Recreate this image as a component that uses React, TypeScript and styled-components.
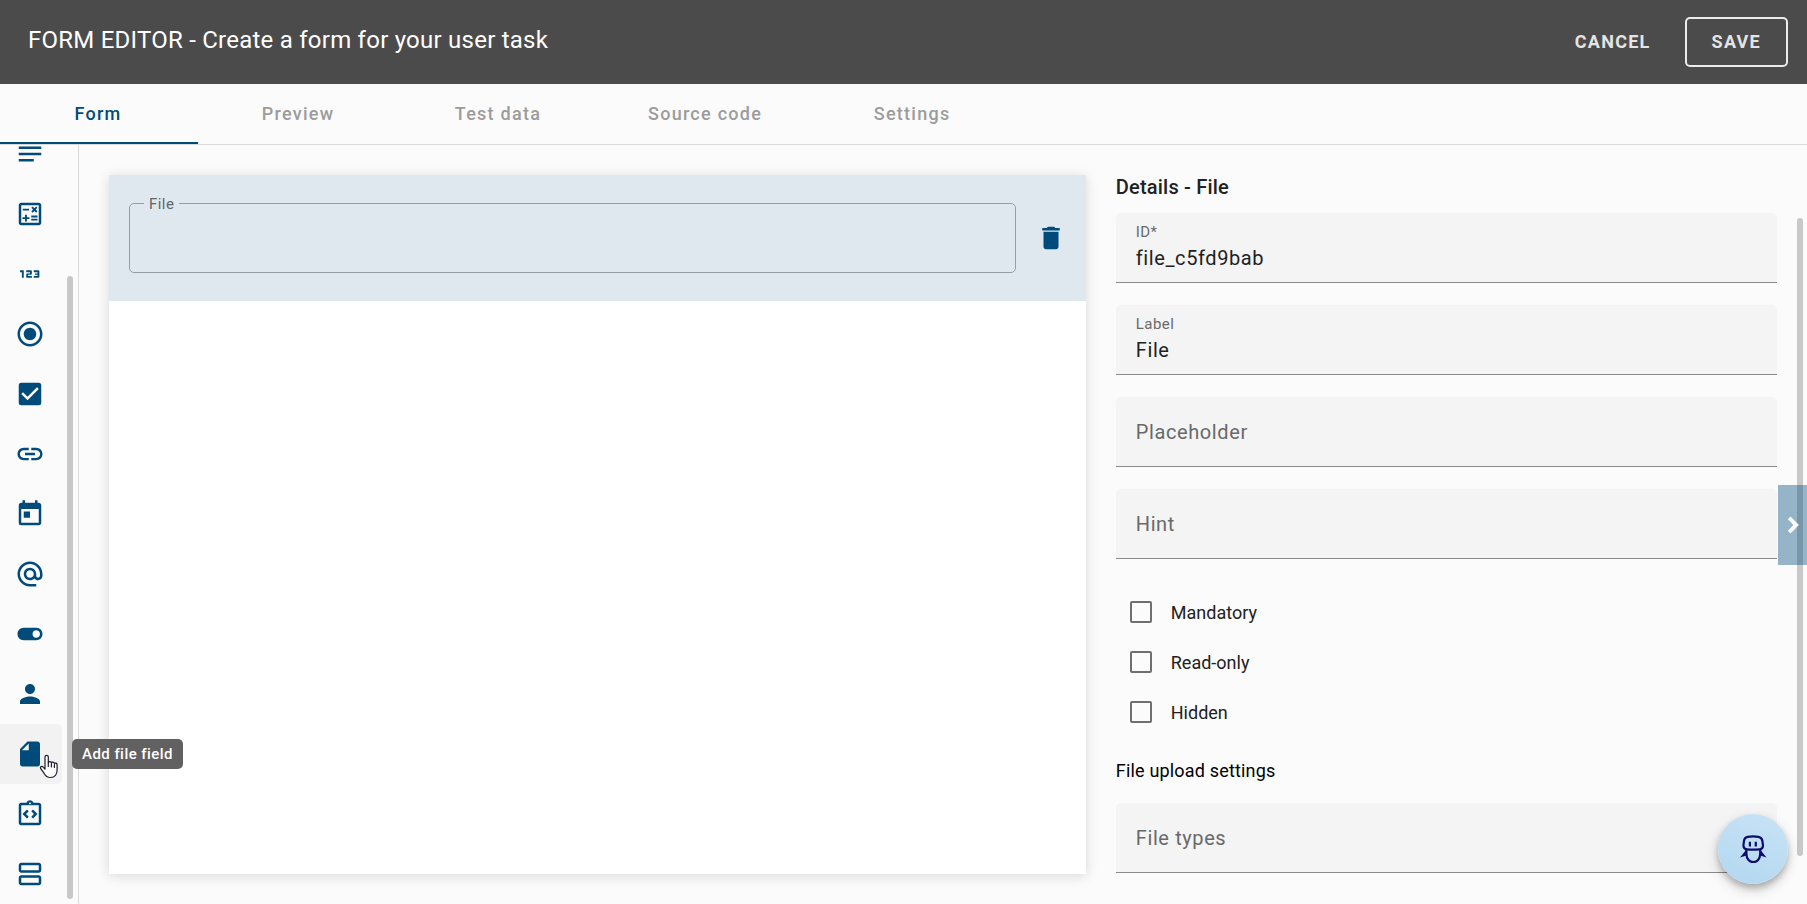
import React, { useState } from "react";
import styled, { createGlobalStyle, css } from "styled-components";
import type { IconType } from "react-icons";
import {
  Md123,
  MdAlternateEmail,
  MdCheckBox,
  MdChevronRight,
  MdDelete,
  MdInsertDriveFile,
  MdLink,
  MdNotes,
  MdOutlineCalculate,
  MdOutlineIntegrationInstructions,
  MdOutlineViewAgenda,
  MdPerson,
  MdRadioButtonChecked,
  MdToday,
  MdToggleOn,
} from "react-icons/md";

const color = {
  primary: "#004b7a",
  surface: "#fbfbfb",
  header: "#4b4b4b",
  line: "#dadada",
  field: "#f4f4f4",
  text: "#212121",
  muted: "#696969",
  scrollbar: "#c8c8c8",
};

const GlobalStyle = createGlobalStyle`
  *, *::before, *::after { box-sizing: border-box; }
  body {
    margin: 0;
    background: ${color.surface};
    color: ${color.text};
    font-family: Roboto, "Liberation Sans", sans-serif;
    font-size: 18px;
  }
  button, input { font: inherit; color: inherit; }
`;

const Page = styled.div`
  display: flex;
  flex-direction: column;
  height: 100vh;
  overflow: hidden;
`;

const Header = styled.header`
  display: flex;
  align-items: center;
  justify-content: space-between;
  flex: none;
  height: 84px;
  padding: 0 19px 0 28px;
  background: ${color.header};
`;

const Title = styled.h1`
  margin: 0 0 4px;
  color: #fff;
  font-size: 24px;
  font-weight: 400;
  line-height: 32px;
  letter-spacing: 0.01em;
`;

const HeaderActions = styled.div`
  display: flex;
  gap: 14px;
`;

const HeaderButton = styled.button<{ $outlined?: boolean }>`
  height: 50px;
  padding: 0 ${(p) => (p.$outlined ? 25 : 20)}px 2px;
  border: ${(p) => (p.$outlined ? "2px solid #ebebeb" : "0")};
  border-radius: 5px;
  background: none;
  color: #e4e4e4;
  font-size: 18px;
  font-weight: 700;
  letter-spacing: 0.07em;
`;

const TabBar = styled.nav`
  display: flex;
  flex: none;
  height: 61px;
  margin-left: -2px;
  border-bottom: 1px solid ${color.line};
`;

const Tab = styled.button<{ $active: boolean }>`
  min-width: 200px;
  padding: 0 50px;
  border: 0;
  border-bottom: 2px solid ${(p) => (p.$active ? color.primary : "transparent")};
  background: none;
  color: ${(p) => (p.$active ? color.primary : "#9c9c9c")};
  font-size: 18px;
  font-weight: 500;
  letter-spacing: 0.07em;
`;

const Workspace = styled.div`
  display: flex;
  flex: 1;
  min-height: 0;
`;

const Rail = styled.aside`
  position: relative;
  display: flex;
  flex-direction: column;
  justify-content: flex-end;
  flex: none;
  width: 79px;
  border-right: 1px solid ${color.line};
`;

const RailList = styled.div`
  display: flex;
  flex-direction: column;
  justify-content: flex-end;
  width: 62px;
  height: 100%;
  overflow: hidden;
`;

const RailButton = styled.button<{ $hovered: boolean; $mirrored: boolean }>`
  display: flex;
  align-items: center;
  flex: none;
  height: 60px;
  padding: 0 15px;
  border: 0;
  border-radius: 0 5px 5px 0;
  background: ${(p) => (p.$hovered ? "#f2f2f2" : "none")};
  color: ${color.primary};

  ${(p) =>
    p.$mirrored &&
    css`
      svg { transform: scaleX(-1); }
    `}
`;

const ScrollThumb = styled.div<{ $top: number; $bottom: number; $right: number }>`
  position: absolute;
  top: ${(p) => p.$top}px;
  right: ${(p) => p.$right}px;
  bottom: ${(p) => p.$bottom}px;
  width: 6px;
  border-radius: 3px;
  background: ${color.scrollbar};
`;

const Tooltip = styled.div`
  position: absolute;
  z-index: 2;
  bottom: 135px;
  left: 72px;
  padding: 0 10px;
  border-radius: 5px;
  background: #616161;
  color: #fff;
  font-size: 15px;
  font-weight: 500;
  line-height: 30px;
  letter-spacing: 0.03em;
  white-space: nowrap;
`;

const Pointer = styled.svg`
  position: absolute;
  z-index: 3;
  bottom: 125px;
  left: 39px;
`;

const Content = styled.main`
  position: relative;
  display: grid;
  flex: 1;
  grid-template-columns: minmax(0, 65fr) minmax(0, 44fr);
  gap: 30px;
  padding: 30px;
`;

const Canvas = styled.section`
  background: #fff;
  box-shadow: 0 2px 12px rgba(0, 0, 0, 0.14);
`;

const SelectedRow = styled.div`
  display: flex;
  align-items: center;
  gap: 5px;
  height: 126px;
  padding: 0 5px 0 20px;
  background: #e0e8ef;
`;

const OutlinedField = styled.fieldset`
  flex: 1;
  min-width: 0;
  height: 80px;
  margin: 0 0 10px;
  padding: 0 14px;
  border: 1px solid #979ea3;
  border-radius: 5px;
`;

const OutlinedLegend = styled.legend`
  padding: 2px 5px 0;
  color: #60666a;
  font-size: 15px;
  line-height: 18px;
  letter-spacing: 0.03em;
`;

const OutlinedInput = styled.input`
  width: 100%;
  height: 48px;
  border: 0;
  outline: 0;
  background: none;
  font-size: 20px;
`;

const IconButton = styled.button`
  display: grid;
  place-items: center;
  width: 60px;
  height: 60px;
  padding: 0;
  border: 0;
  background: none;
  color: ${color.primary};
`;

const Details = styled.section`
  min-width: 0;
`;

const DetailsTitle = styled.h2`
  margin: 0 0 14px;
  font-size: 20px;
  font-weight: 500;
  line-height: 24px;
  letter-spacing: 0.01em;
`;

const FieldStack = styled.div`
  display: grid;
  gap: 22px;
`;

const FilledField = styled.label`
  display: flex;
  flex-direction: column;
  justify-content: center;
  height: 70px;
  padding: 0 20px;
  border-bottom: 1px solid #8a8a8a;
  border-radius: 5px 5px 0 0;
  background: ${color.field};
`;

const FieldLabel = styled.span`
  color: ${color.muted};
  font-size: 15px;
  line-height: 20px;
  letter-spacing: 0.03em;
`;

const FieldInput = styled.input`
  width: 100%;
  height: 32px;
  padding: 0;
  border: 0;
  outline: 0;
  background: none;
  font-size: 20px;
  letter-spacing: 0.03em;

  &::placeholder {
    color: ${color.muted};
    opacity: 1;
  }
`;

const CheckStack = styled.div`
  display: grid;
  padding: 28px 0 22px 14px;
`;

const CheckLabel = styled.label`
  display: flex;
  align-items: center;
  gap: 19px;
  height: 50px;
`;

const CheckInput = styled.input`
  appearance: none;
  width: 22px;
  height: 22px;
  margin: 0;
  border: 2px solid #6f6f6f;
  border-radius: 2px;

  &:checked { background: ${color.primary}; }
`;

const SectionTitle = styled.h3`
  margin: 0 0 20px;
  color: #000;
  font-size: 18px;
  font-weight: 400;
  line-height: 24px;
  letter-spacing: 0.01em;
`;

const PanelToggle = styled.button`
  position: absolute;
  top: 340px;
  right: 0;
  display: grid;
  place-items: center;
  width: 29px;
  height: 80px;
  padding: 0;
  border: 0;
  background: rgba(0, 75, 122, 0.4);
  color: #fff;

  path:last-child { stroke: currentColor; stroke-width: 1px; }
`;

const AssistantButton = styled.button`
  position: absolute;
  right: 19px;
  bottom: 20px;
  display: grid;
  place-items: center;
  width: 70px;
  height: 70px;
  padding: 0;
  border: 0;
  border-radius: 50%;
  background: linear-gradient(20deg, #b3d7f0, #c8e3f5);
  box-shadow: 0 4px 6px rgba(0, 0, 0, 0.22), 0 6px 14px rgba(0, 0, 0, 0.16);
`;

const tools: { label: string; icon: IconType; mirrored?: boolean }[] = [
  { label: "Add text area", icon: MdNotes },
  { label: "Add calculated field", icon: MdOutlineCalculate },
  { label: "Add number field", icon: Md123 },
  { label: "Add radio group", icon: MdRadioButtonChecked },
  { label: "Add checkbox", icon: MdCheckBox },
  { label: "Add link", icon: MdLink },
  { label: "Add date field", icon: MdToday },
  { label: "Add email field", icon: MdAlternateEmail },
  { label: "Add toggle", icon: MdToggleOn },
  { label: "Add user field", icon: MdPerson },
  { label: "Add file field", icon: MdInsertDriveFile, mirrored: true },
  { label: "Add code field", icon: MdOutlineIntegrationInstructions },
  { label: "Add section", icon: MdOutlineViewAgenda },
];

const tabs = ["Form", "Preview", "Test data", "Source code", "Settings"];

function Field({ label, value }: { label: string; value?: string }) {
  return (
    <FilledField>
      {value && <FieldLabel>{label}</FieldLabel>}
      <FieldInput aria-label={label} defaultValue={value} placeholder={value ? undefined : label} />
    </FilledField>
  );
}

function ToolRail() {
  const hovered = "Add file field";
  return (
    <Rail>
      <RailList>
        {tools.map(({ label, icon: Icon, mirrored }) => (
          <RailButton key={label} aria-label={label} $hovered={label === hovered} $mirrored={!!mirrored}>
            <Icon size={30} />
          </RailButton>
        ))}
      </RailList>
      <ScrollThumb $top={131} $right={5} $bottom={5} />
      <Tooltip role="tooltip">{hovered}</Tooltip>
      <Pointer width="20" height="25" viewBox="0 0 20 25" aria-hidden="true">
        <path
          d="M6 15V3C6 .7 9.300.7 9.300 3V8.500c.3-1.400 2.900-1.300 3.100.4.500-1.200 2.900-.9 3 .7.800-1 2.700-.5 2.700 1.200v5.200c0 4.500-2.300 7.500-6.600 7.500-3.500 0-5.200-1.900-6.500-4.300L1.700 14.700c-1-2 1.300-3.100 2.700-1.400z"
          fill="#fff"
          stroke="#1c1c30"
          strokeWidth="1.2"
          strokeLinejoin="round"
        />
        <path d="M9.3 8.500v4M12.400 9.500v3.500M15.400 10.500v3" stroke="#1c1c30" strokeWidth="1.2" strokeLinecap="round" />
      </Pointer>
    </Rail>
  );
}

function RobotIcon() {
  return (
    <svg width="28" height="28" viewBox="0 0 28 28" aria-hidden="true">
      <g fill="none" stroke="#0d0d6b" strokeWidth="2.2">
        <path d="M8.500 1.900Q14 .9 19.500 1.900Q23 2.700 23.400 6L24 10.500Q24 14 20.500 14.300Q14 15 8 14.300Q4.500 14 4.400 10.500L5 6Q5.300 2.700 8.500 1.900Z" />
        <path d="M10.900 6.800v4.800M16.800 6.800v4.800" />
        <path d="M7.400 14.500V18.500C7.400 30 21.200 30 21.200 18.500V14.500" />
      </g>
      <path d="M7 15L1 22.500L7.500 20.500ZM21.500 15L27.500 22.500L21 20.500Z" fill="#0d0d6b" />
    </svg>
  );
}

export default function App() {
  const [activeTab, setActiveTab] = useState("Form");

  return (
    <Page>
      <GlobalStyle />
      <Header>
        <Title>FORM EDITOR - Create a form for your user task</Title>
        <HeaderActions>
          <HeaderButton>CANCEL</HeaderButton>
          <HeaderButton $outlined>SAVE</HeaderButton>
        </HeaderActions>
      </Header>
      <TabBar>
        {tabs.map((tab) => (
          <Tab key={tab} $active={tab === activeTab} onClick={() => setActiveTab(tab)}>
            {tab}
          </Tab>
        ))}
      </TabBar>
      <Workspace>
        <ToolRail />
        <Content>
          <Canvas>
            <SelectedRow>
              <OutlinedField>
                <OutlinedLegend>File</OutlinedLegend>
                <OutlinedInput aria-label="File" />
              </OutlinedField>
              <IconButton aria-label="Delete field">
                <MdDelete size={30} />
              </IconButton>
            </SelectedRow>
          </Canvas>
          <Details>
            <DetailsTitle>Details - File</DetailsTitle>
            <FieldStack>
              <Field label="ID*" value="file_c5fd9bab" />
              <Field label="Label" value="File" />
              <Field label="Placeholder" />
              <Field label="Hint" />
            </FieldStack>
            <CheckStack>
              {["Mandatory", "Read-only", "Hidden"].map((option) => (
                <CheckLabel key={option}>
                  <CheckInput type="checkbox" />
                  {option}
                </CheckLabel>
              ))}
            </CheckStack>
            <SectionTitle>File upload settings</SectionTitle>
            <Field label="File types" />
          </Details>
          <ScrollThumb $top={73} $right={4} $bottom={48} />
          <PanelToggle aria-label="Collapse details">
            <MdChevronRight size={30} />
          </PanelToggle>
          <AssistantButton aria-label="Open assistant">
            <RobotIcon />
          </AssistantButton>
        </Content>
      </Workspace>
    </Page>
  );
}
